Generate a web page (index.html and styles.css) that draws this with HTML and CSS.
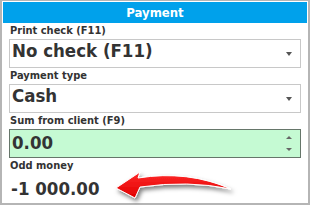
FILE: index.html
```html
<!DOCTYPE html>
<html>
<head>
<meta charset="utf-8">
<link rel="stylesheet" href="styles.css">
</head>
<body>
<div class="panel">
  <div class="header">Payment</div>
  <div class="content">
    <div class="field">
      <div class="label">Print check (F11)</div>
      <div class="combo"><span class="value">No check (F11)</span><span class="caret"></span></div>
    </div>
    <div class="field">
      <div class="label">Payment type</div>
      <div class="combo"><span class="value">Cash</span><span class="caret"></span></div>
    </div>
    <div class="field">
      <div class="label">Sum from client (F9)</div>
      <div class="spin"><span class="value">0.00</span><span class="spinbtns"><span class="up"></span><span class="down"></span></span></div>
    </div>
    <div class="field">
      <div class="label">Odd money</div>
      <div class="result">-1 000.00</div>
    </div>
  </div>
  <svg class="arrow" width="140" height="40" viewBox="0 0 140 40">
    <defs>
      <filter id="sh" x="-20%" y="-50%" width="150%" height="220%">
        <feDropShadow dx="2" dy="3" stdDeviation="2" flood-color="#000" flood-opacity="0.5"/>
      </filter>
      <linearGradient id="rg" x1="0" y1="0" x2="0" y2="1">
        <stop offset="0" stop-color="#ff2a2a"/>
        <stop offset="1" stop-color="#e00000"/>
      </linearGradient>
    </defs>
    <path d="M16,23 L40,7 L38,13 Q88,5 131,24 Q88,15 40,22 L35,33 Z" fill="url(#rg)" stroke="#fff" stroke-width="1" stroke-linejoin="round" filter="url(#sh)"/>
  </svg>
</div>
</body>
</html>
```
FILE: styles.css
```css
html, body {
  margin: 0;
  padding: 0;
  background: #fff;
}
body {
  width: 310px;
  height: 206px;
  overflow: hidden;
  font-family: "DejaVu Sans Condensed", "DejaVu Sans", sans-serif;
  font-stretch: condensed;
  color: #333;
}
.panel {
  position: relative;
  box-sizing: border-box;
  width: 310px;
  height: 205px;
  border: 2px solid #b5b5b5;
  border-top-width: 1px;
  padding: 1px;
}
.header {
  height: 21px;
  line-height: 21px;
  background: #00a1eb;
  color: #fff;
  font-weight: bold;
  font-size: 13px;
  text-align: center;
}
.content {
  padding: 1px 6px 0;
}
.field {
  margin-bottom: 1px;
}
.label {
  font-size: 11px;
  font-weight: bold;
  line-height: 14px;
  margin-bottom: 1px;
  padding-left: 1px;
}
.combo, .spin {
  box-sizing: border-box;
  height: 29px;
  border: 1px solid #c8c8c8;
  display: flex;
  justify-content: space-between;
  align-items: center;
  padding: 0 8px 0 2px;
}
.spin {
  background: #c5fad3;
  border-color: #66766a;
}
.value {
  align-self: flex-start;
  font-size: 18.5px;
  font-weight: bold;
  line-height: 22px;
}
.spin .value {
  padding-top: 2px;
}
.caret {
  width: 0;
  height: 0;
  border-left: 3.5px solid transparent;
  border-right: 3.5px solid transparent;
  border-top: 4px solid #555;
}
.spinbtns {
  display: flex;
  flex-direction: column;
  gap: 9px;
}
.up {
  width: 0;
  height: 0;
  border-left: 3.5px solid transparent;
  border-right: 3.5px solid transparent;
  border-bottom: 3px solid #666;
}
.down {
  width: 0;
  height: 0;
  border-left: 3.5px solid transparent;
  border-right: 3.5px solid transparent;
  border-top: 3px solid #666;
}
.result {
  margin-top: 5px;
  font-size: 18.5px;
  font-weight: bold;
  line-height: 22px;
  padding-left: 2px;
}
.arrow {
  position: absolute;
  left: 98px;
  top: 164px;
}
```
